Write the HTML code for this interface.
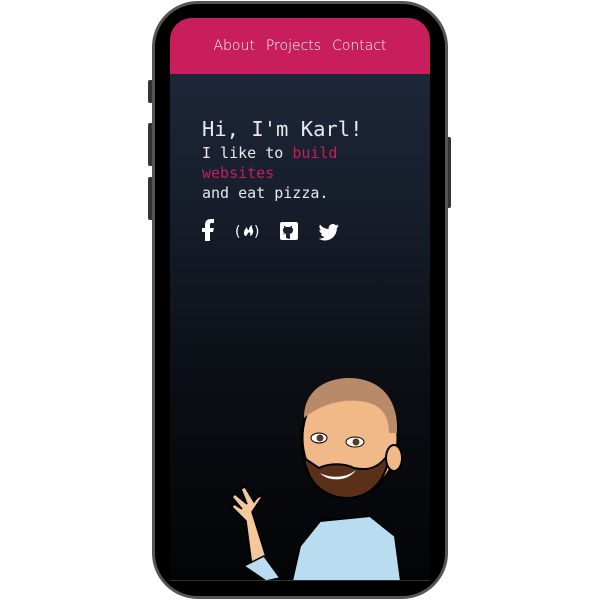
<!DOCTYPE html>
<html><head><style>
body{margin:0;width:600px;height:600px;background:#fff;position:relative;overflow:hidden}
.btn{position:absolute;background:#333;border-radius:2px}
.phone{position:absolute;left:152px;top:1px;width:290px;height:592px;border:3px solid #555;border-radius:46px;background:#000}
.screen{position:absolute;left:170px;top:18px;width:260px;height:563px;border-radius:22px 22px 0 0;overflow:hidden;background:linear-gradient(#212b3e 0%,#161d2a 35%,#0b0e14 65%,#030405 100%)}
.hdr{height:56px;background:#c81e5c;display:flex;justify-content:center;align-items:center;gap:11px;color:#fff;font:14px "DejaVu Sans","Liberation Sans",sans-serif;font-weight:300}
.txt{position:absolute;left:32px;top:97px;font-family:"DejaVu Sans Mono","Liberation Mono",monospace;color:#e8e8ea}
h1{margin:0;font-size:20.5px;font-weight:normal;line-height:28px}
p{margin:0;font-size:15px;line-height:20px}
.pk{color:#c81e5c}
</style></head><body>
<div class="btn" style="left:148px;top:80px;width:5px;height:23px"></div>
<div class="btn" style="left:148px;top:123px;width:5px;height:43px"></div>
<div class="btn" style="left:148px;top:177px;width:5px;height:43px"></div>
<div class="btn" style="left:446px;top:137px;width:5px;height:71px"></div>
<div class="phone"></div>
<div class="screen">
<div class="hdr"><span>About</span><span>Projects</span><span>Contact</span></div>
<div class="txt"><h1>Hi, I'm Karl!</h1><p>I like to <span class="pk">build<br>websites</span><br>and eat pizza.</p></div>
<svg style="position:absolute;left:0;top:0" width="260" height="563">
<path d="M35 223v-9h-3v-4h3v-3c0-4 2-6 6-6h3v4h-2c-2 0-2 1-2 2v3h4l-1 4h-3v9z" fill="#fff"/>
<text x="65" y="218" fill="#fff" font-family="DejaVu Sans" font-size="14">(</text>
<path d="M75 218c-2-3-1-6 2-9 0 2 1 3 2 3 0-2 1-4 3-5-1 3 2 5 1 8-1 2-2 3-3 3 1-2 0-3-1-4-1 1-2 3-3 4z" fill="#fff"/>
<text x="84" y="218" fill="#fff" font-family="DejaVu Sans" font-size="14">)</text>
<rect x="110" y="204" width="18" height="18" rx="2" fill="#fff"/>
<path d="M116 220v-3c-3 0-3-2-4-2 1 0 2 1 2 1 1 1 2 1 2 1 0-1 0-1 1-1-3 0-4-2-4-4 0-1 0-2 1-2v-2c1 0 2 1 2 1h4c0 0 1-1 2-1v2c1 0 1 1 1 2 0 2-1 4-4 4 1 0 1 1 1 2v3z" fill="#1a2230"/>
<g transform="translate(149 204) scale(0.85)"><path d="M23.6 4.6c-.9.4-1.8.6-2.8.8 1-.6 1.8-1.6 2.1-2.7-.9.6-2 1-3.1 1.2-.9-1-2.2-1.6-3.6-1.6-2.7 0-4.9 2.2-4.9 4.9 0 .4 0 .8.1 1.1-4.1-.2-7.7-2.2-10.2-5.2-.4.7-.7 1.6-.7 2.5 0 1.7.9 3.2 2.2 4.1-.8 0-1.6-.2-2.2-.6v.1c0 2.4 1.7 4.4 3.9 4.8-.4.1-.8.2-1.3.2-.3 0-.6 0-.9-.1.6 2 2.4 3.4 4.6 3.4-1.7 1.3-3.8 2.1-6.1 2.1-.4 0-.8 0-1.2-.1 2.2 1.4 4.8 2.2 7.5 2.2 9.1 0 14-7.5 14-14v-.6c1-.7 1.8-1.6 2.5-2.5z" fill="#fff"/></g>
<!-- avatar -->
<path d="M122 563l8-35 20-25 50-5 25 20 6 45z" fill="#b9dcf0" stroke="#000" stroke-width="2"/>
<path d="M82 545l14-6-14-45 10-15c-3-3-8 5-8 5l-9-15-4 2 6 15-12-10-3 3 10 12-8-5-2 3 14 14 5 38z" fill="#f4c89a" stroke="#000" stroke-width="1.5"/>
<path d="M74 548l20-10 16 22-14 3z" fill="#b9dcf0" stroke="#000" stroke-width="1.5"/>
<ellipse cx="180" cy="420" rx="48" ry="58" fill="#f2b988" stroke="#000" stroke-width="3"/>
<path d="M134 400c0-30 25-40 45-40 30 0 50 20 48 55l-8 0c0-20-10-30-30-32-20-2-40 5-55 17z" fill="#b98a6a"/>
<path d="M134 440c5 30 25 40 45 40 30-2 40-30 40-45-10 15-20 18-35 15-10-5-25-5-35 0z" fill="#5a3018" stroke="#000" stroke-width="2"/>
<path d="M150 455c10 5 25 6 36-3-8 12-28 12-36 3z" fill="#fff"/>
<ellipse cx="149" cy="420" rx="8" ry="5" fill="#fff" stroke="#000"/>
<ellipse cx="185" cy="424" rx="9" ry="5" fill="#fff" stroke="#000"/>
<circle cx="150" cy="420" r="3.5" fill="#5a3a20"/><circle cx="186" cy="424" r="3.5" fill="#5a3a20"/>
<ellipse cx="224" cy="440" rx="8" ry="13" fill="#f2b988" stroke="#000" stroke-width="2"/>
<rect x="0" y="562" width="260" height="1" fill="#333"/>
</svg>
</div>
</body></html>
